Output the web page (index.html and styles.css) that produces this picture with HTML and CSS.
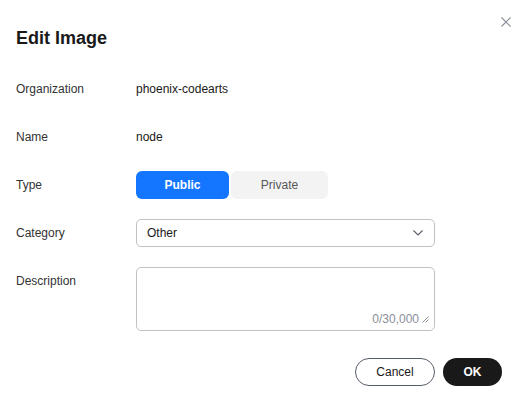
FILE: index.html
```html
<!DOCTYPE html>
<html lang="en">
<head>
    <meta charset="UTF-8">
    <meta name="viewport" content="width=device-width, initial-scale=1.0">
    <title>Edit Image</title>
    <link rel="stylesheet" href="styles.css">
</head>
<body>
    <div class="dialog">
        <button class="close" aria-label="Close">
            <svg width="10" height="10" viewBox="0 0 10 10"><path d="M0.5 0.5L9.5 9.5M9.5 0.5L0.5 9.5" stroke="#8a8e99" stroke-width="1.1" fill="none"/></svg>
        </button>
        <h1 class="title">Edit Image</h1>

        <div class="form">
            <div class="row">
                <span class="label">Organization</span>
                <span class="value">phoenix-codearts</span>
            </div>
            <div class="row">
                <span class="label">Name</span>
                <span class="value">node</span>
            </div>
            <div class="row">
                <span class="label">Type</span>
                <div class="segment">
                    <button class="seg seg-active">Public</button>
                    <button class="seg seg-plain">Private</button>
                </div>
            </div>
            <div class="row">
                <span class="label">Category</span>
                <div class="select">
                    <span>Other</span>
                    <svg width="10" height="6" viewBox="0 0 10 6"><path d="M0.5 0.5L5 5L9.5 0.5" stroke="#575d6c" stroke-width="1.1" fill="none"/></svg>
                </div>
            </div>
            <div class="row row-top">
                <span class="label">Description</span>
                <div class="textarea">
                    <span class="counter">0/30,000</span>
                    <svg class="grip" width="7" height="7" viewBox="0 0 7 7"><path d="M6.5 0.5L0.5 6.5M6.5 3.5L3.5 6.5" stroke="#8a8e99" stroke-width="1" fill="none"/></svg>
                </div>
            </div>
        </div>

        <div class="footer">
            <button class="btn btn-cancel">Cancel</button>
            <button class="btn btn-ok">OK</button>
        </div>
    </div>
</body>
</html>
```
FILE: styles.css
```css
/* Reset */
* {
    margin: 0;
    padding: 0;
    box-sizing: border-box;
}

body {
    font-family: "Liberation Sans", Arial, sans-serif;
    font-size: 12px;
    color: #191919;
    background-color: #ffffff;
}

button {
    font: inherit;
    cursor: pointer;
}

/* Dialog */
.dialog {
    position: relative;
    width: 529px;
    height: 398px;
    padding: 26px 27px 0 16px;
}

.close {
    position: absolute;
    top: 17px;
    right: 18px;
    width: 10px;
    height: 10px;
    border: none;
    background: none;
    display: flex;
}

.title {
    font-size: 18px;
    line-height: 24px;
    font-weight: 700;
    color: #191919;
}

/* Form */
.form {
    margin-top: 25px;
    width: 419px;
    display: flex;
    flex-direction: column;
    gap: 20px;
}

.row {
    display: flex;
    align-items: center;
    min-height: 28px;
}

.row-top {
    align-items: flex-start;
}

.label {
    width: 120px;
    flex-shrink: 0;
    line-height: 28px;
    color: #333333;
}

.value {
    line-height: 28px;
    color: #191919;
}

.segment {
    display: flex;
    gap: 2px;
}

.seg {
    height: 28px;
    border: none;
    border-radius: 6px;
}

.seg-active {
    width: 93px;
    background-color: #1476ff;
    color: #ffffff;
    font-weight: 700;
}

.seg-plain {
    width: 97px;
    background-color: #f3f3f3;
    color: #575757;
}

.select {
    flex: 1;
    height: 28px;
    border: 1px solid #c2c2c2;
    border-radius: 5px;
    display: flex;
    align-items: center;
    justify-content: space-between;
    padding: 0 11px 0 10px;
}

.textarea {
    flex: 1;
    height: 64px;
    border: 1px solid #c2c2c2;
    border-radius: 5px;
    display: flex;
    align-items: flex-end;
    justify-content: flex-end;
    gap: 3px;
    padding: 0 5px 3px;
    color: #8a8e99;
}

.counter {
    line-height: 16px;
}

.grip {
    margin-bottom: 4px;
}

/* Footer */
.footer {
    margin-top: 27px;
    display: flex;
    justify-content: flex-end;
    gap: 8px;
}

.btn {
    height: 28px;
    border-radius: 14px;
}

.btn-cancel {
    width: 80px;
    border: 1px solid #575d6c;
    background-color: #ffffff;
    color: #191919;
}

.btn-ok {
    width: 59px;
    border: none;
    background-color: #191919;
    color: #ffffff;
    font-weight: 700;
}
```
